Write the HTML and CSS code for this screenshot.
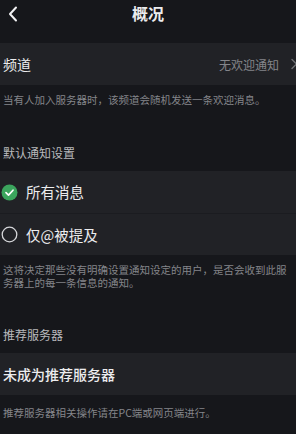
FILE: index.html
```html
<!DOCTYPE html>
<html lang="zh-CN">
<head>
    <meta charset="UTF-8">
    <meta name="viewport" content="width=device-width, initial-scale=1.0">
    <title>概况</title>
    <link rel="stylesheet" href="styles.css">
</head>
<body>
<div class="header">
    <svg class="back" width="10" height="16" viewBox="0 0 10 16">
        <path d="M8 1.5 L2 8 L8 14.5" fill="none" stroke="#f2f2f4" stroke-width="2" stroke-linecap="round" stroke-linejoin="round"/>
    </svg>
    <h1>概况</h1>
</div>

<div class="row">
    <span class="row-label">频道</span>
    <span class="row-value">无欢迎通知</span>
    <svg class="arrow" width="8" height="12" viewBox="0 0 8 12">
        <path d="M2 1.5 L6.5 6 L2 10.5" fill="none" stroke="#6f7074" stroke-width="1.4" stroke-linecap="round" stroke-linejoin="round"/>
    </svg>
</div>
<p class="desc">当有人加入服务器时，该频道会随机发送一条欢迎消息。</p>

<div class="section-title section-first">默认通知设置</div>
<div class="row option">
    <svg class="radio" width="17" height="17" viewBox="0 0 17 17">
        <circle cx="8.5" cy="8.5" r="8" fill="#3ba55d"/>
        <path d="M5 8.7 L7.5 11.1 L12 6.2" fill="none" stroke="#ffffff" stroke-width="1.7" stroke-linecap="round" stroke-linejoin="round"/>
    </svg>
    <span class="row-label">所有消息</span>
</div>
<div class="row option">
    <svg class="radio" width="17" height="17" viewBox="0 0 17 17">
        <circle cx="8.5" cy="8.5" r="7.3" fill="none" stroke="#d6d7da" stroke-width="1.3"/>
    </svg>
    <span class="row-label">仅@被提及</span>
</div>
<p class="desc desc-two">这将决定那些没有明确设置通知设定的用户，是否会收到此服务器上的每一条信息的通知。</p>

<div class="section-title section-second">推荐服务器</div>
<div class="row">
    <span class="row-label strong">未成为推荐服务器</span>
</div>
<p class="desc desc-last">推荐服务器相关操作请在PC端或网页端进行。</p>
</body>
</html>
```

FILE: styles.css
```css
:root {
    --page-bg: #16171b;
    --row-bg: #212226;
    --text-color: #ececee;
    --muted: #84858a;
    --section: #b8b9bc;
    --green: #3ba55d;
}

* {
    margin: 0;
    padding: 0;
    box-sizing: border-box;
}

body {
    font-family: "Noto Sans CJK SC", "Noto Sans", sans-serif;
    background-color: var(--page-bg);
    color: var(--text-color);
    width: 296px;
    height: 434px;
    overflow: hidden;
}

.header {
    position: relative;
    height: 29px;
    margin-bottom: 14px;
    display: flex;
    align-items: center;
    justify-content: center;
}

.header h1 {
    font-size: 16px;
    font-weight: 700;
    line-height: 20px;
    margin-top: -3px;
}

.back {
    position: absolute;
    left: 8px;
    top: 6px;
}

.row {
    height: 42px;
    background-color: var(--row-bg);
    display: flex;
    align-items: center;
    padding-left: 3px;
}

.row-label {
    font-size: 14px;
    line-height: 18px;
}

.row-label.strong {
    font-weight: 500;
}

.row-value {
    margin-left: auto;
    font-size: 12px;
    color: var(--muted);
}

.arrow {
    margin-left: 11px;
    margin-right: -2px;
}

.option {
    padding-left: 1px;
}

.option .row-label {
    font-size: 14.5px;
}

.option + .option {
    border-top: 1px solid #1b1c20;
}

.radio {
    margin-right: 8px;
}

.desc {
    font-size: 10.5px;
    line-height: 13px;
    color: var(--muted);
    padding: 8px 3px 0;
}

.section-title {
    font-size: 12px;
    line-height: 18px;
    color: var(--section);
    padding: 0 3px 9px;
}

.section-first {
    padding-top: 38px;
}

.section-second {
    padding-top: 37px;
}

.desc-last {
    padding-top: 11px;
}
```
